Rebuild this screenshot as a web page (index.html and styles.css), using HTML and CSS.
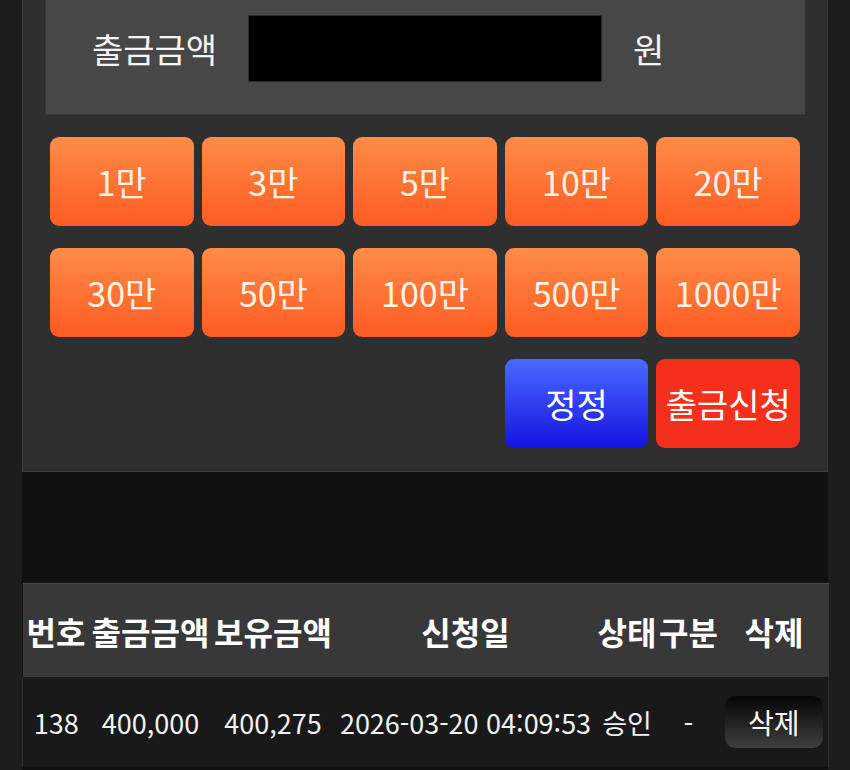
FILE: index.html
```html
<!DOCTYPE html>
<html lang="ko">
<head>
    <meta charset="UTF-8">
    <meta name="viewport" content="width=device-width, initial-scale=1.0">
    <title>출금신청</title>
    <link rel="stylesheet" href="styles.css">
</head>
<body>
    <div class="wrap">
        <div class="form-box">
            <div class="amount-panel">
                <span class="amount-label">출금금액</span>
                <input type="text" class="amount-input" id="amount">
                <span class="amount-unit">원</span>
            </div>

            <div class="quick-grid">
                <button class="quick-btn">1만</button>
                <button class="quick-btn">3만</button>
                <button class="quick-btn">5만</button>
                <button class="quick-btn">10만</button>
                <button class="quick-btn">20만</button>
                <button class="quick-btn">30만</button>
                <button class="quick-btn">50만</button>
                <button class="quick-btn">100만</button>
                <button class="quick-btn">500만</button>
                <button class="quick-btn">1000만</button>
                <button class="act-btn btn-reset">정정</button>
                <button class="act-btn btn-submit">출금신청</button>
            </div>
        </div>

        <div class="spacer"></div>

        <table class="history">
            <colgroup>
                <col style="width: 67px">
                <col style="width: 122px">
                <col style="width: 123px">
                <col style="width: 262px">
                <col style="width: 61px">
                <col style="width: 62px">
                <col style="width: 109px">
            </colgroup>
            <thead>
                <tr>
                    <th>번호</th>
                    <th>출금금액</th>
                    <th>보유금액</th>
                    <th>신청일</th>
                    <th>상태</th>
                    <th>구분</th>
                    <th>삭제</th>
                </tr>
            </thead>
            <tbody>
                <tr>
                    <td>138</td>
                    <td>400,000</td>
                    <td>400,275</td>
                    <td>2026-03-20 04:09:53</td>
                    <td>승인</td>
                    <td>-</td>
                    <td><button class="del-btn">삭제</button></td>
                </tr>
            </tbody>
        </table>
    </div>
</body>
</html>
```

FILE: styles.css
```css
body {
    margin: 0;
    background: #1d1d1d;
    font-family: "Noto Sans CJK KR", "Noto Sans", sans-serif;
    color: #fff;
}

.wrap {
    width: 806px;
    margin-left: 22px;
    background: #111;
    min-height: 770px;
}

.form-box {
    background: #2f2f2f;
    border: 1px solid #3c3c3c;
    border-top: none;
    padding: 0 22px 23px;
}

.amount-panel {
    background: #474747;
    border-bottom: 1px solid #3a3a3a;
    border-left: 1px solid #3a3a3a;
    display: flex;
    align-items: center;
    padding: 15px 0 32px 46px;
}

.amount-label {
    font-size: 34px;
    color: #f4f4f4;
    width: 124px;
    white-space: nowrap;
}

.amount-input {
    width: 354px;
    height: 67px;
    box-sizing: border-box;
    margin-left: 32px;
    background: #000;
    border: 1px solid #2a2a2a;
    outline: none;
    color: #fff;
    font-size: 26px;
}

.amount-unit {
    font-size: 34px;
    color: #f4f4f4;
    margin-left: 31px;
}

.quick-grid {
    display: grid;
    grid-template-columns: repeat(5, 1fr);
    gap: 22px 8px;
    padding: 0 5px;
    margin-top: 22px;
}

button {
    font-family: inherit;
    border: none;
    cursor: pointer;
}

.quick-btn,
.act-btn {
    height: 89px;
    border-radius: 9px;
    font-size: 34px;
    padding: 0;
    white-space: nowrap;
}

.quick-btn {
    background: linear-gradient(#ff8c48, #ff5b22);
    color: #fff4e4;
}

.act-btn {
    color: #fff;
}

.btn-reset {
    grid-column: 4;
    background: linear-gradient(#4b6aff, #1414e2);
}

.btn-submit {
    background: #f42f1c;
}

.spacer {
    height: 111px;
}

.history {
    width: 806px;
    border-collapse: collapse;
    table-layout: fixed;
}

.history th {
    background: #383838;
    border-top: 1px solid #4a4a4a;
    height: 93px;
    padding: 0;
    font-size: 32px;
    font-weight: bold;
    color: #fff;
    white-space: nowrap;
}

.history td {
    background: #191919;
    height: 90px;
    padding: 0;
    text-align: center;
    font-size: 27px;
    color: #f2f2f2;
    white-space: nowrap;
}

.history tbody tr {
    border-left: 1px solid #2e2e2e;
    border-right: 1px solid #2e2e2e;
}

.del-btn {
    width: 98px;
    height: 52px;
    border-radius: 10px;
    background: linear-gradient(#050505, #3e3e3e);
    color: #fff;
    font-size: 28px;
    padding: 0;
    vertical-align: middle;
}
```
